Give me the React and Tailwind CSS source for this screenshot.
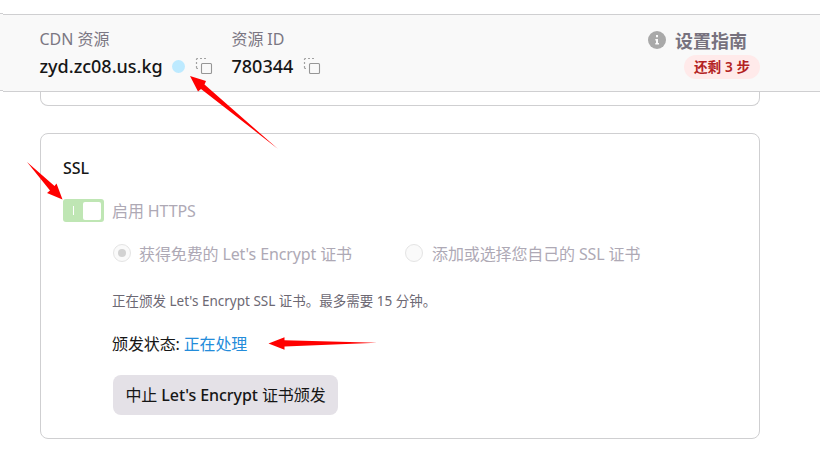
import React from "react";

const CopyIcon = ({ className }) => (
  <svg width="18" height="18" viewBox="0 0 18 18" fill="none" className={className}>
    <path d="M1.5 3V2.5a1 1 0 0 1 1-1H3M5 1.5h2M9 1.5h2M1.5 5v2M1.5 9v1.5a1 1 0 0 0 1 1H3" stroke="#a2a2a2" strokeWidth="1.2" />
    <rect x="6.5" y="6.5" width="10" height="10" rx="1" stroke="#969696" strokeWidth="1.1" />
  </svg>
);

const InfoIcon = () => (
  <svg width="18" height="18" viewBox="0 0 18 18" className="mt-4 shrink-0">
    <circle cx="9" cy="9" r="9" fill="#a9a9a9" />
    <path d="M8 4h2v2.2H8zM7.3 8H10v4h1v1.6H7.3V12H8V9.5h-.7z" fill="#fafafa" />
  </svg>
);

function Header() {
  return (
    <header className="flex h-[79px] w-full shrink-0">
      <div className="h-[78px] w-[3px] border-y border-[#cfcfd1] bg-[#f9f9f9]" />
      <div className="mt-px flex h-[78px] flex-1 border-y border-[#cfcfd1] bg-[#f9f9f9] pl-[36.5px]">
        <div className="w-[192px] shrink-0 pt-3">
          <div className="h-[25px] text-base leading-6 whitespace-nowrap text-[#7b7783]">CDN 资源</div>
          <div className="flex h-7 items-center text-lg leading-7 font-medium text-[#161616]">
            <span className="w-[132px] whitespace-nowrap">zyd.zc08.us.kg</span>
            <span className="size-[13px] rounded-full bg-[#bdeaff]" />
            <CopyIcon className="ml-[10.5px] -mt-px" />
          </div>
        </div>
        <div className="w-[416.5px] shrink-0 pt-3">
          <div className="h-[25px] text-base leading-6 tracking-[-0.1px] whitespace-nowrap text-[#7b7783]">资源 ID</div>
          <div className="flex h-7 items-center text-lg leading-7 font-medium text-[#161616]">
            <span className="w-[71.5px] whitespace-nowrap">780344</span>
            <CopyIcon className="-mt-px" />
          </div>
        </div>
        <InfoIcon />
        <div className="ml-[9px] pt-[13px]">
          <div className="h-[27px] text-lg leading-[26px] font-bold whitespace-nowrap text-[#77727e]">设置指南</div>
          <div className="ml-[9px] flex h-6 w-[76px] items-center justify-center rounded-full bg-[#ffeaea] text-[13.6px] font-semibold tracking-[0.1px] whitespace-nowrap text-[#b32222]">
            还剩 3 步
          </div>
        </div>
      </div>
    </header>
  );
}

function Toggle() {
  return (
    <div className="flex h-[23px] w-[41px] items-center rounded-[3px] bg-[#bfe6b4] pr-[3px] pl-[10px]">
      <span className="h-[9px] w-px bg-white" />
      <span className="ml-auto size-[18px] rounded-[2px] bg-white" />
    </div>
  );
}

function Radio({ checked }) {
  return (
    <span className="mb-[2px] flex size-[18px] shrink-0 items-center justify-center rounded-full border border-[#e4e4e4] bg-[#fafafa]">
      {checked && <span className="size-2 rounded-full bg-[#d2d2d2]" />}
    </span>
  );
}

function Annotations() {
  return (
    <svg width="820" height="454" viewBox="0 0 820 454" className="pointer-events-none absolute top-0 left-0" fill="#ff0000">
      <path d="M190 76L206 81L204.5 84.5L278 149L201 89L198 91.5Z" />
      <path d="M62.5 199.5L56.5 183.5L54.5 186L27 162L50 190.5L47 193Z" />
      <path d="M268.5 343.5L284.5 337.3V340.3L377 342.7L284.5 346.5V349.7Z" />
    </svg>
  );
}

export default function App() {
  return (
    <div className="relative flex h-[454px] w-[820px] flex-col overflow-hidden bg-white pt-[13px] font-['Noto_Sans','Noto_Sans_CJK_SC',sans-serif]">
      <Header />
      <div className="ml-10 h-[14px] w-[720px] shrink-0 rounded-b-lg border border-t-0 border-[#cfcfd1]" />
      <main className="mt-[27px] ml-10 h-[306px] w-[720px] shrink-0 rounded-lg border border-[#cfcfd1] pt-[22px] pl-[22px]">
        <h2 className="h-6 text-base leading-6 font-medium text-[#161616]">SSL</h2>
        <div className="mt-[19px] flex h-[23px] items-center text-base text-[#aea9b5]">
          <Toggle />
          <span className="ml-2 tracking-[-0.1px] whitespace-nowrap">启用 HTTPS</span>
        </div>
        <div className="ml-[50px]">
          <div className="mt-[20px] flex h-6 items-center text-base leading-6 tracking-[-0.12px] text-[#aea9b5]">
            <div className="flex w-[292px] items-center gap-2">
              <Radio checked />
              <span className="whitespace-nowrap">获得免费的 Let's Encrypt 证书</span>
            </div>
            <div className="flex items-center gap-[9px]">
              <Radio />
              <span className="whitespace-nowrap">添加或选择您自己的 SSL 证书</span>
            </div>
          </div>
          <p className="mt-[25px] -ml-px h-5 text-[13.5px] leading-5 text-[#6c6873]">正在颁发 Let's Encrypt SSL 证书。最多需要 15 分钟。</p>
          <p className="mt-[21px] -ml-px h-6 text-base leading-6 tracking-[-0.12px] text-[#161616]">
            颁发状态: <span className="text-[#238cda]">正在处理</span>
          </p>
          <button className="mt-[19px] flex h-10 w-[225px] items-center justify-center rounded-lg bg-[#e4e1e7] text-base tracking-[-0.08px] whitespace-pre text-[#161616]">
            <span>中止 </span>
            <span className="font-medium">Let's Encrypt</span>
            <span> 证书颁发</span>
          </button>
        </div>
      </main>
      <Annotations />
    </div>
  );
}
